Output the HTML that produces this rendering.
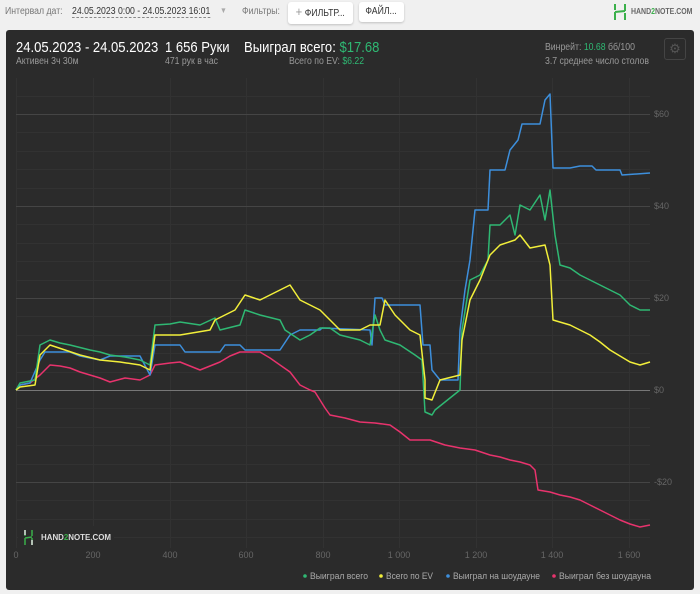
<!DOCTYPE html>
<html><head><meta charset="utf-8"><style>
body{margin:0;width:700px;height:594px;background:#f0f0f0;font-family:"Liberation Sans",sans-serif;position:relative;overflow:hidden}
.t{position:absolute;white-space:nowrap;transform:scaleX(.87);transform-origin:left top}
.btn{position:absolute;background:#fff;border-radius:3px;box-shadow:0 1px 2px rgba(0,0,0,.2);font-size:10px;color:#333;line-height:20px;text-align:center}
.card{position:absolute;left:6px;top:30px;width:688px;height:560px;background:#2b2b2b;border-radius:3px}
.g{color:#2fb873}
</style></head><body>
<div class="t" style="left:5px;top:6px;font-size:10px;color:#777">Интервал дат:</div>
<div class="t" style="left:72px;top:6px;font-size:10px;color:#333;border-bottom:1px dashed #888">24.05.2023 0:00 - 24.05.2023 16:01</div>
<div class="t" style="left:220px;top:6px;font-size:8px;color:#aaa">▼</div>
<div class="t" style="left:242px;top:6px;font-size:10px;color:#777">Фильтры:</div>
<div class="btn" style="left:288px;top:2px;width:65px"><span style="display:inline-block;transform:scaleX(.87)"><span style="color:#999;font-size:13px">+</span> ФИЛЬТР...</span></div>
<div class="btn" style="left:359px;top:2px;width:45px"><span style="display:inline-block;transform:scaleX(.87)">ФАЙЛ...</span></div>
<svg style="position:absolute;left:612px;top:3px" width="16" height="18"><path d="M3 1v6M3 9v8M13 1v7M13 10v7M3 9l10-1" stroke="#3ab04a" stroke-width="2" fill="none"/></svg>
<div class="t" style="left:631px;top:7px;font-size:8px;font-weight:bold;color:#666">HAND<span style="color:#3ab04a">2</span>NOTE.COM</div>
<div class="card"></div>
<div class="t" style="left:16px;top:39px;font-size:15px;color:#fff">24.05.2023 - 24.05.2023</div>
<div class="t" style="left:16px;top:56px;font-size:10px;color:#999">Активен 3ч 30м</div>
<div class="t" style="left:165px;top:39px;font-size:15px;color:#fff">1 656 Руки</div>
<div class="t" style="left:165px;top:56px;font-size:10px;color:#999">471 рук в час</div>
<div class="t" style="left:244px;top:39px;font-size:15px;color:#fff">Выиграл всего: <span class="g">$17.68</span></div>
<div class="t" style="left:289px;top:56px;font-size:10px;color:#999">Всего по EV: <span class="g">$6.22</span></div>
<div class="t" style="left:545px;top:42px;font-size:10px;color:#999">Винрейт: <span class="g">10.68</span> бб/100</div>
<div class="t" style="left:545px;top:56px;font-size:10px;color:#999">3.7 среднее число столов</div>
<div style="position:absolute;left:664px;top:38px;width:20px;height:20px;border:1px solid #444;border-radius:3px;color:#555;font-size:13px;text-align:center;line-height:20px">⚙</div>
<svg style="position:absolute;left:0;top:0" width="700" height="594">
<g stroke="#323232" stroke-width="1">
<path d="M16.5 78v470M93.5 78v470M170.5 78v470M246.5 78v470M323.5 78v470M399.5 78v470M476.5 78v470M552.5 78v470M629.5 78v470"/>
<path d="M16 96.5h634M16 132.5h634M16 151.5h634M16 169.5h634M16 188.5h634M16 224.5h634M16 243.5h634M16 261.5h634M16 280.5h634M16 316.5h634M16 335.5h634M16 353.5h634M16 372.5h634M16 408.5h634M16 427.5h634M16 445.5h634M16 464.5h634M16 500.5h634M16 519.5h634M16 537.5h634"/>
</g>
<g stroke="#454545"><path d="M16 114.5h634M16 206.5h634M16 298.5h634M16 482.5h634"/></g>
<path d="M16 390.5h634" stroke="#777"/>
<g fill="#666" font-size="9" font-family="Liberation Sans">
<text x="654" y="117">$60</text><text x="654" y="209">$40</text><text x="654" y="301">$20</text><text x="654" y="393">$0</text><text x="654" y="485">-$20</text>
<g text-anchor="middle"><text x="16" y="558">0</text><text x="93" y="558">200</text><text x="170" y="558">400</text><text x="246" y="558">600</text><text x="323" y="558">800</text><text x="399" y="558">1 000</text><text x="476" y="558">1 200</text><text x="552" y="558">1 400</text><text x="629" y="558">1 600</text></g>
</g>
<g fill="none" stroke-width="1.5" stroke-linejoin="round">
<polyline stroke="#e8336d" points="16,390 20,385 30,383 40,375 50,365 60,366 70,368 80,372 90,375 100,378 110,382 125,378 140,380 150,375 155,365 170,363 180,362 190,366 200,370 210,366 220,362 230,356 240,352 260,352 270,358 280,365 290,372 300,385 310,390 315,392 320,400 325,408 330,415 345,418 360,422 375,423 390,425 400,432 410,440 430,440 445,445 460,448 475,450 490,455 500,457 510,460 520,462 530,465 535,470 538,490 550,492 560,495 570,497 580,500 590,505 600,510 610,515 620,520 630,524 640,527 650,525"/>
<polyline stroke="#3d8fdc" points="16,390 20,385 30,383 40,360 45,352 70,352 80,356 100,360 110,356 140,356 150,375 155,345 180,345 185,352 220,352 225,345 240,345 245,350 280,350 290,335 300,330 320,330 322,328 370,330 372,345 375,298 382,298 385,305 420,305 423,345 430,345 432,370 440,380 458,380 460,330 465,290 470,260 475,210 488,210 490,170 505,170 510,150 518,140 522,124 540,124 545,100 550,94 553,168 570,168 580,166 592,166 596,170 620,170 622,175 650,173"/>
<polyline stroke="#2fb873" points="16,390 20,383 35,380 40,345 50,340 60,343 70,345 90,350 100,352 110,355 125,357 140,360 150,365 155,325 170,324 180,322 200,325 215,318 220,330 240,325 245,310 260,315 280,320 285,330 300,340 310,335 320,328 330,328 340,335 360,340 370,345 375,315 380,330 385,340 400,345 415,355 422,360 425,412 432,415 435,410 460,390 462,330 470,280 480,275 488,260 490,225 500,225 510,215 515,235 520,205 530,210 540,195 545,220 550,190 555,235 560,265 570,268 580,275 590,280 600,285 610,290 620,295 630,305 640,310 650,310"/>
<polyline stroke="#f2ef3a" points="16,390 20,387 35,385 40,355 50,345 65,350 80,355 100,360 120,362 140,365 150,370 155,335 180,335 210,330 215,320 235,310 245,295 260,300 270,295 280,290 290,285 300,300 310,305 320,310 330,320 340,330 360,330 370,325 380,325 385,300 395,315 410,330 420,335 425,380 425,398 432,400 440,380 460,375 462,340 470,300 480,280 490,255 500,245 515,240 520,235 530,248 545,245 550,265 553,320 570,325 580,330 590,335 600,342 610,350 620,356 630,362 640,365 650,362"/>
</g>
<rect x="18" y="526" width="96" height="22" fill="#2b2b2b"/>
<path d="M25 530v6M25 538v7M32 530v6M32 538v7M25 538l7-1" stroke="#3ab04a" stroke-width="1.5" fill="none"/>
<path d="M25 530v5M32 540v5" stroke="#ddd" stroke-width="1.5"/>
<text x="41" y="540" fill="#ddd" font-size="8" font-weight="bold" font-family="Liberation Sans" textLength="70" lengthAdjust="spacingAndGlyphs">HAND<tspan fill="#3ab04a">2</tspan>NOTE.COM</text>
<g font-size="9" font-family="Liberation Sans" fill="#aaa">
<circle cx="305" cy="576" r="1.8" fill="#2fb873"/><text x="310" y="579" textLength="58" lengthAdjust="spacingAndGlyphs">Выиграл всего</text>
<circle cx="381" cy="576" r="1.8" fill="#f2ef3a"/><text x="386" y="579" textLength="47" lengthAdjust="spacingAndGlyphs">Всего по EV</text>
<circle cx="448" cy="576" r="1.8" fill="#3d8fdc"/><text x="453" y="579" textLength="87" lengthAdjust="spacingAndGlyphs">Выиграл на шоудауне</text>
<circle cx="554" cy="576" r="1.8" fill="#e8336d"/><text x="559" y="579" textLength="92" lengthAdjust="spacingAndGlyphs">Выиграл без шоудауна</text>
</g>
</svg>
</body></html>
